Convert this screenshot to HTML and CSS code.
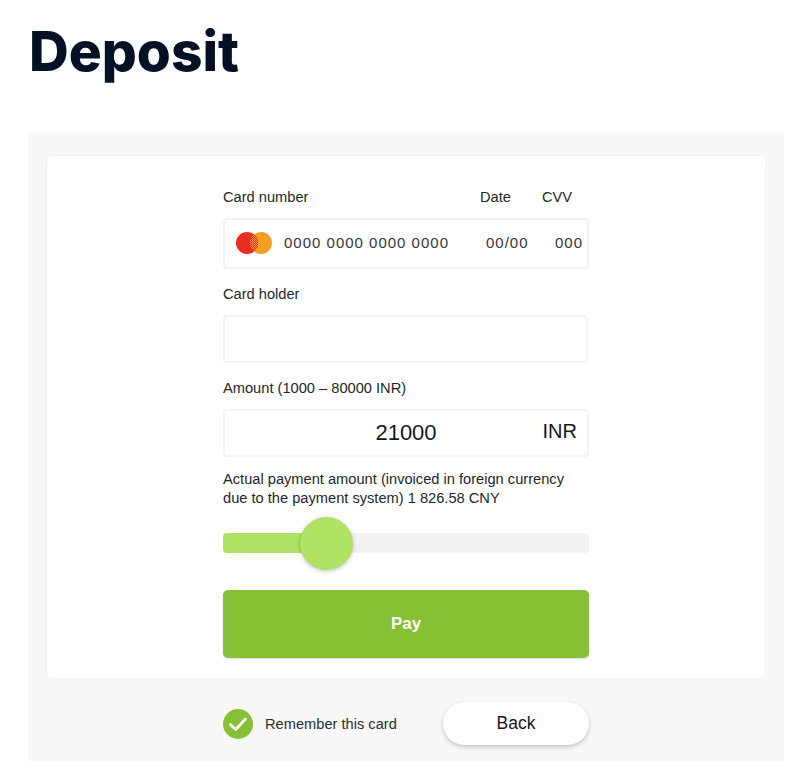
FILE: index.html
```html
<!DOCTYPE html>
<html lang="en">
<head>
<meta charset="utf-8">
<title>Deposit</title>
<link rel="stylesheet" href="styles.css">
</head>
<body>
<h1 class="title">Deposit</h1>
<main class="panel">
  <section class="card">
    <form class="form">
      <div class="label-row">
        <span class="label-grow">Card number</span>
        <span class="label-date">Date</span>
        <span class="label-cvv">CVV</span>
      </div>
      <div class="field field-card">
        <svg class="mc" width="38" height="24" viewBox="0 0 38 24" aria-hidden="true">
          <defs>
            <pattern id="mc-dither" width="2" height="2" patternUnits="userSpaceOnUse">
              <rect width="2" height="2" fill="#e92f22"/>
              <rect width="1" height="1" fill="#f59e23"/>
              <rect x="1" y="1" width="1" height="1" fill="#f59e23"/>
            </pattern>
          </defs>
          <circle cx="26" cy="12" r="11" fill="#f59e23"/>
          <circle cx="12" cy="12" r="11" fill="#e92f22"/>
          <path d="M19 3.4a11 11 0 0 1 0 17.2a11 11 0 0 1 0-17.2z" fill="url(#mc-dither)"/>
        </svg>
        <span class="card-num">0000 0000 0000 0000</span>
        <span class="card-date">00/00</span>
        <span class="card-cvv">000</span>
      </div>
      <div class="label label-holder">Card holder</div>
      <div class="field field-plain"></div>
      <div class="label label-amount">Amount (1000 – 80000 INR)</div>
      <div class="field field-amount">
        <span class="amount-value">21000</span>
        <span class="amount-cur">INR</span>
      </div>
      <p class="note">Actual payment amount (invoiced in foreign currency due to the payment system) 1 826.58 CNY</p>
      <div class="slider">
        <div class="slider-fill" style="width:28%"></div>
        <div class="slider-thumb"></div>
      </div>
      <button class="pay" type="button">Pay</button>
    </form>
  </section>
  <div class="footer">
    <label class="remember">
      <svg class="check" width="30" height="30" viewBox="0 0 30 30" aria-hidden="true">
        <circle cx="15" cy="15" r="15" fill="#86c034"/>
        <path d="M7.5 15.5l5.2 5L22.5 10" fill="none" stroke="#fff" stroke-width="2.8" stroke-linecap="round" stroke-linejoin="round"/>
      </svg>
      <span>Remember this card</span>
    </label>
    <button class="back" type="button">Back</button>
  </div>
</main>
</body>
</html>
```
FILE: styles.css
```css
* { box-sizing: border-box; }
html, body { margin: 0; height: 761px; overflow: hidden; background: #fff; }
body { font-family: "Liberation Sans", Arial, sans-serif; color: #24272b; font-size: 14.65px; }
.title {
  margin: 0;
  padding: 15px 0 0 29px;
  height: 132px;
  font-family: Inter, sans-serif;
  font-weight: 800;
  font-size: 55px;
  line-height: 72px;
  color: #021224;
}
.panel {
  margin: 0 16px 0 28px;
  height: 629px;
  background: #f8f8f8;
  padding: 24px 19px 0;
}
.card {
  height: 522px;
  background: #fff;
  border-radius: 5px;
  box-shadow: 0 0 3px rgba(0,0,0,.06);
  padding-top: 32px;
  display: flex;
  justify-content: center;
}
.form { width: 366px; }
.label-row { display: flex; height: 18px; line-height: 18px; }
.label-grow { flex: 1; }
.label-date { width: 62px; }
.label-cvv { width: 47px; }
.field {
  background: #fff;
  border: 2px solid #f3f3f3;
  border-radius: 4px;
}
.field-card {
  margin-top: 12px;
  height: 51px;
  display: flex;
  align-items: center;
  padding: 0 0 2px 10px;
  letter-spacing: 1px;
  font-size: 15px;
  color: #33363a;
}
.mc { flex: none; margin-right: 11px; width: 38px; height: 24px; }
.card-num { width: 202px; white-space: nowrap; }
.card-date { width: 69px; }
.card-cvv { white-space: nowrap; }
.label { height: 18px; line-height: 18px; }
.label-holder { margin-top: 16px; }
.field-plain { margin-top: 12px; height: 48px; width: 365px; }
.label-amount { margin-top: 16px; }
.field-amount {
  margin-top: 12px;
  height: 48px;
  display: flex;
  align-items: center;
  position: relative;
  justify-content: center;
  color: #14181f;
  font-size: 22px;
}
.amount-cur { position: absolute; right: 10px; font-size: 20px; top: 9px; }
.note { margin: 13px 0 0; line-height: 19px; width: 350px; }
.slider {
  position: relative;
  margin-top: 25px;
  height: 20px;
  background: #f3f3f3;
  border-radius: 4px;
}
.slider-fill {
  height: 20px;
  background: #b0e264;
  border-radius: 4px 0 0 4px;
}
.slider-thumb {
  position: absolute;
  left: 77px;
  top: -16px;
  width: 53px;
  height: 53px;
  border-radius: 50%;
  background: #b0e264;
  box-shadow: 0 1px 4px rgba(0,0,0,.25);
}
.pay {
  display: block;
  width: 100%;
  margin-top: 37px;
  height: 68px;
  border: 0;
  border-radius: 5px;
  background: #86c034;
  color: #fff;
  font: 700 17px "Liberation Sans", Arial, sans-serif;
  box-shadow: 0 1px 2px rgba(0,0,0,.15);
}
.footer {
  display: flex;
  align-items: center;
  width: 366px;
  margin: 24px auto 0;
  justify-content: space-between;
}
.remember { display: flex; align-items: center; gap: 12px; font-size: 14.65px; color: #2c2f33; }
.check { display: block; }
.back {
  width: 146px;
  height: 43px;
  border: 0;
  border-radius: 22px;
  background: #fff;
  color: #14181f;
  font: 400 17.5px "Liberation Sans", Arial, sans-serif;
  box-shadow: 0 2px 4px rgba(0,0,0,.22);
}
```
